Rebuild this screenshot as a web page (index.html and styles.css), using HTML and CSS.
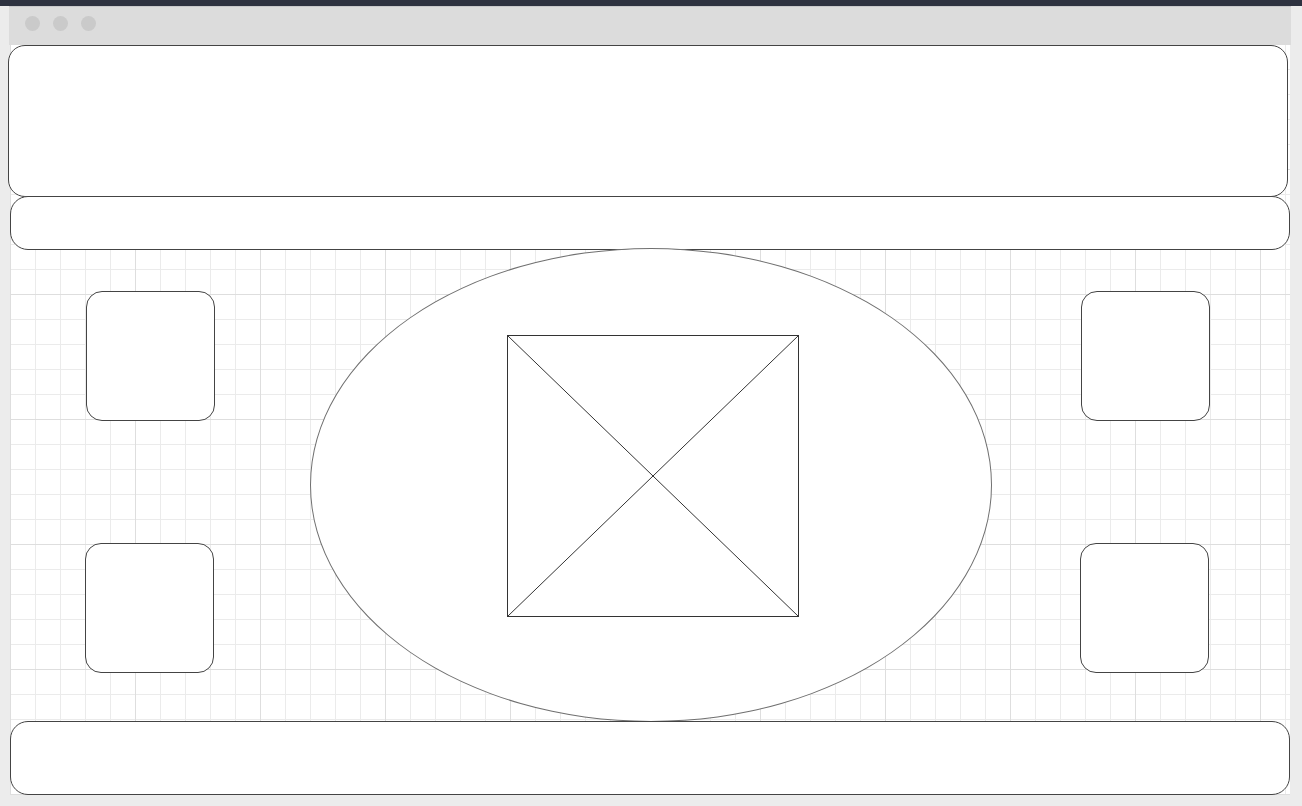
FILE: index.html
```html
<!DOCTYPE html>
<html>
<head>
<meta charset="utf-8">
<link rel="stylesheet" href="styles.css">
</head>
<body>
<div class="topbar"></div>
<div class="chrome">
  <span class="dot"></span><span class="dot"></span><span class="dot"></span>
</div>
<div class="canvas">
  <div class="box header"></div>
  <div class="box nav"></div>
  <div class="stage">
    <div class="col col-left">
      <div class="tile"></div>
      <div class="tile tile-b"></div>
    </div>
    <div class="ellipse">
      <svg class="placeholder" width="292" height="282" viewBox="0 0 292 282">
        <rect x="0.5" y="0.5" width="291" height="281" fill="#fff" stroke="#333" stroke-width="1"/>
        <line x1="0.5" y1="0.5" x2="291.5" y2="281.5" stroke="#333" stroke-width="1"/>
        <line x1="291.5" y1="0.5" x2="0.5" y2="281.5" stroke="#333" stroke-width="1"/>
      </svg>
    </div>
    <div class="col col-right">
      <div class="tile"></div>
      <div class="tile tile-b"></div>
    </div>
  </div>
  <div class="box footer"></div>
</div>
</body>
</html>
```

FILE: styles.css
```css
html, body {
  margin: 0;
  padding: 0;
}
body {
  background: #ececec;
  width: 1302px;
  height: 806px;
  overflow: hidden;
  font-family: "Liberation Sans", Arial, sans-serif;
}
.topbar {
  height: 6px;
  background: #2e3240;
}
.chrome {
  box-sizing: border-box;
  margin-left: 9px;
  width: 1282px;
  height: 39px;
  border-top: 1px solid #c9c9cb;
  background: #dcdcdc;
  display: flex;
  align-items: flex-start;
  gap: 13px;
  padding-left: 16px;
  padding-top: 9px;
}
.dot {
  width: 15px;
  height: 15px;
  border-radius: 50%;
  background: #cacaca;
}
.canvas {
  margin-left: 10px;
  width: 1280px;
  height: 750px;
  background-color: #fff;
  background-image:
    linear-gradient(to right, #dedede 1px, transparent 1px),
    linear-gradient(to bottom, #dedede 1px, transparent 1px),
    linear-gradient(to right, #ebebeb 1px, transparent 1px),
    linear-gradient(to bottom, #ebebeb 1px, transparent 1px);
  background-size: 125px 125px, 125px 125px, 25px 25px, 25px 25px;
  background-position: 0 -1px, 0 -1px, 0 -1px, 0 -1px;
  display: flex;
  flex-direction: column;
}
.box {
  box-sizing: border-box;
  background: #fff;
  border: 1px solid #444;
  border-radius: 18px;
  width: 1280px;
  position: relative;
}
.header {
  height: 152px;
  margin-left: -2px;
  border-radius: 17px;
  z-index: 1;
}
.nav {
  height: 54px;
  margin-top: -1px;
  z-index: 2;
}
.stage {
  height: 471px;
  display: flex;
}
.col {
  box-sizing: border-box;
  display: flex;
  flex-direction: column;
  padding-top: 41px;
  gap: 122px;
}
.col-left {
  width: 300px;
  padding-left: 76px;
}
.col-right {
  width: 298px;
  padding-left: 89px;
}
.tile {
  box-sizing: border-box;
  width: 129px;
  height: 130px;
  background: #fff;
  border: 1px solid #444;
  border-radius: 16px;
}
.col-left .tile-b,
.col-right .tile-b {
  margin-left: -1px;
}
.ellipse {
  box-sizing: border-box;
  flex: 0 0 auto;
  width: 682px;
  height: 474px;
  margin-top: -2px;
  border: 1px solid #707070;
  border-radius: 50%;
  background: #fff;
  padding-top: 86px;
  padding-left: 196px;
  position: relative;
  z-index: 3;
}
.placeholder {
  display: block;
}
.footer {
  height: 74px;
  z-index: 4;
}
```
